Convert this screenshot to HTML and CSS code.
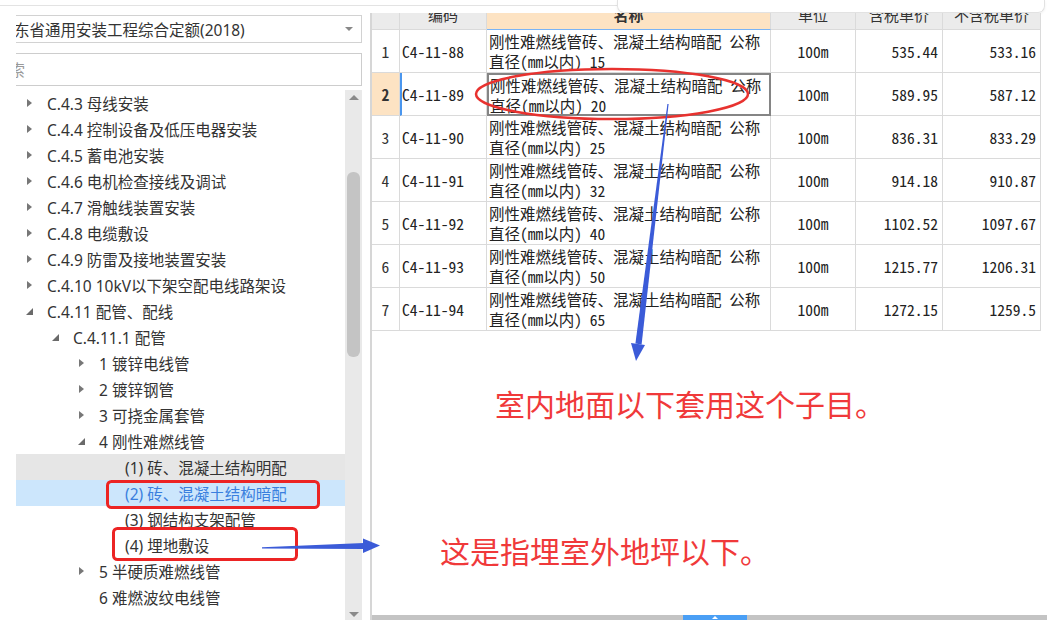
FILE: index.html
```html
<!DOCTYPE html>
<html lang="zh-CN">
<head>
<meta charset="UTF-8" />
<title>定额查询</title>
<link rel="stylesheet" href="styles.css">
</head>
<body>
<div class="page">
  <div class="topbar">
    <div class="topline"></div>
    <div class="popup"></div>
  </div>

  <div class="main">
    <div class="left">
      <div class="combo">
        <span class="combo-text">东省通用安装工程综合定额(2018)</span>
        <span class="combo-arrow"></span>
      </div>
      <div class="search"><span class="search-text">搜索</span></div>
      <div class="tree-wrap">
        <div class="tree">
          <div class="node lv0"><span class="tg closed"></span>C.4.3 母线安装</div>
          <div class="node lv0"><span class="tg closed"></span>C.4.4 控制设备及低压电器安装</div>
          <div class="node lv0"><span class="tg closed"></span>C.4.5 蓄电池安装</div>
          <div class="node lv0"><span class="tg closed"></span>C.4.6 电机检查接线及调试</div>
          <div class="node lv0"><span class="tg closed"></span>C.4.7 滑触线装置安装</div>
          <div class="node lv0"><span class="tg closed"></span>C.4.8 电缆敷设</div>
          <div class="node lv0"><span class="tg closed"></span>C.4.9 防雷及接地装置安装</div>
          <div class="node lv0"><span class="tg closed"></span>C.4.10 10kV以下架空配电线路架设</div>
          <div class="node lv0"><span class="tg open"></span>C.4.11 配管、配线</div>
          <div class="node lv1"><span class="tg open"></span>C.4.11.1 配管</div>
          <div class="node lv2"><span class="tg closed"></span>1 镀锌电线管</div>
          <div class="node lv2"><span class="tg closed"></span>2 镀锌钢管</div>
          <div class="node lv2"><span class="tg closed"></span>3 可挠金属套管</div>
          <div class="node lv2"><span class="tg open"></span>4 刚性难燃线管</div>
          <div class="node lv3 hover"><span class="tg"></span>(1) 砖、混凝土结构明配</div>
          <div class="node lv3 selected"><span class="tg"></span>(2) 砖、混凝土结构暗配</div>
          <div class="node lv3"><span class="tg"></span>(3) 钢结构支架配管</div>
          <div class="node lv3"><span class="tg"></span>(4) 埋地敷设</div>
          <div class="node lv2"><span class="tg closed"></span>5 半硬质难燃线管</div>
          <div class="node lv2"><span class="tg"></span>6 难燃波纹电线管</div>
        </div>
        <div class="vscroll">
          <span class="sc-up"></span>
          <div class="thumb"></div>
          <span class="sc-down"></span>
        </div>
      </div>
    </div>

    <div class="right">
      <div class="grid">
        <div class="c hd"><span></span></div>
        <div class="c hd"><span>编码</span></div>
        <div class="c hd cur"><span>名称</span></div>
        <div class="c hd"><span>单位</span></div>
        <div class="c hd"><span>含税单价</span></div>
        <div class="c hd"><span>不含税单价</span></div>

        <div class="c num">1</div>
        <div class="c code">C4-11-88</div>
        <div class="c name">刚性难燃线管砖、混凝土结构暗配 公称<br>直径(mm以内) 15</div>
        <div class="c unit">100m</div>
        <div class="c price">535.44</div>
        <div class="c price">533.16</div>

        <div class="c num active">2</div>
        <div class="c code mark">C4-11-89</div>
        <div class="c name focus">刚性难燃线管砖、混凝土结构暗配 公称<br>直径(mm以内) 20</div>
        <div class="c unit">100m</div>
        <div class="c price">589.95</div>
        <div class="c price">587.12</div>

        <div class="c num">3</div>
        <div class="c code">C4-11-90</div>
        <div class="c name">刚性难燃线管砖、混凝土结构暗配 公称<br>直径(mm以内) 25</div>
        <div class="c unit">100m</div>
        <div class="c price">836.31</div>
        <div class="c price">833.29</div>

        <div class="c num">4</div>
        <div class="c code">C4-11-91</div>
        <div class="c name">刚性难燃线管砖、混凝土结构暗配 公称<br>直径(mm以内) 32</div>
        <div class="c unit">100m</div>
        <div class="c price">914.18</div>
        <div class="c price">910.87</div>

        <div class="c num">5</div>
        <div class="c code">C4-11-92</div>
        <div class="c name">刚性难燃线管砖、混凝土结构暗配 公称<br>直径(mm以内) 40</div>
        <div class="c unit">100m</div>
        <div class="c price">1102.52</div>
        <div class="c price">1097.67</div>

        <div class="c num">6</div>
        <div class="c code">C4-11-93</div>
        <div class="c name">刚性难燃线管砖、混凝土结构暗配 公称<br>直径(mm以内) 50</div>
        <div class="c unit">100m</div>
        <div class="c price">1215.77</div>
        <div class="c price">1206.31</div>

        <div class="c num">7</div>
        <div class="c code">C4-11-94</div>
        <div class="c name">刚性难燃线管砖、混凝土结构暗配 公称<br>直径(mm以内) 65</div>
        <div class="c unit">100m</div>
        <div class="c price">1272.15</div>
        <div class="c price">1259.5</div>
      </div>
      <div class="blank"></div>
      <div class="hscroll"><div class="hthumb"><span class="hthumb-tri"></span></div></div>
    </div>
  </div>

  <!-- annotations drawn over the screenshot -->
  <svg class="marks" width="1052" height="625" viewBox="0 0 1052 625">
    <ellipse cx="612" cy="94" rx="136" ry="25" fill="none" stroke="#e8322f" stroke-width="2.5" />
    <rect x="107.5" y="481.5" width="211" height="26" rx="4" fill="none" stroke="#ec2424" stroke-width="3" />
    <rect x="113.5" y="528.5" width="183" height="31" rx="4" fill="none" stroke="#ec2424" stroke-width="3" />
    <polygon points="667.4,104 668.6,104 641.6,344.4 635.4,343.6" fill="#3b5bd8" />
    <polygon points="631,343 645,345 636,361" fill="#3b5bd8" />
    <polygon points="262,547.2 262,548.4 364,549 364,543" fill="#3b5bd8" />
    <polygon points="363,538.5 380,545.5 363,553" fill="#3b5bd8" />
  </svg>
  <div class="note note-1">室内地面以下套用这个子目。</div>
  <div class="note note-2">这是指埋室外地坪以下。</div>
</div>
</body>
</html>
```

FILE: styles.css
```css
body {
  margin: 0;
  background: #fff;
  font-family: "Noto Sans", "Noto Sans CJK SC", sans-serif;
  color: #333;
}
.page {
  position: relative;
  width: 1052px;
  height: 625px;
  overflow: hidden;
}
.topbar {
  display: flex;
  height: 13px;
}
.topline {
  width: 617px;
  height: 5px;
  border-bottom: 1px solid #e3e3e3;
}
.popup {
  width: 428px;
  box-sizing: border-box;
  border: 1px solid #e2e2e2;
  border-top: none;
  border-radius: 0 0 7px 7px;
  box-shadow: 0 1px 3px rgba(0, 0, 0, 0.06);
}
.main {
  display: flex;
  height: 612px;
}

/* left tree panel */
.left {
  width: 370px;
  box-sizing: border-box;
  padding: 2px 8px 0 16px;
  display: flex;
  flex-direction: column;
}
.combo {
  height: 28px;
  box-sizing: border-box;
  border: 1px solid #d2d2d2;
  border-left: none;
  display: flex;
  align-items: center;
  justify-content: space-between;
  overflow: hidden;
  font-size: 15.5px;
  color: #333;
}
.combo-text {
  margin-left: -2px;
  white-space: nowrap;
}
.combo-arrow {
  width: 0;
  height: 0;
  margin-right: 8px;
  border-left: 4px solid transparent;
  border-right: 4px solid transparent;
  border-top: 4px solid #888;
}
.search {
  margin-top: 10px;
  height: 33px;
  box-sizing: border-box;
  border: 1px solid #cdcdcd;
  border-left: none;
  display: flex;
  align-items: center;
  overflow: hidden;
  font-size: 15.5px;
  color: #9a9a9a;
}
.search-text {
  margin-left: -22px;
  white-space: nowrap;
}
.tree-wrap {
  margin-top: 4px;
  height: 530px;
  display: flex;
}
.tree {
  flex: 1;
  padding-top: 0;
  overflow: hidden;
}
.node {
  height: 26px;
  display: flex;
  align-items: center;
  font-size: 15.5px;
  color: #333;
  white-space: nowrap;
}
.lv0 { padding-left: 10px; }
.lv1 { padding-left: 36px; }
.lv2 { padding-left: 62px; }
.lv3 { padding-left: 88px; }
.node.hover {
  background: #e6e6e6;
}
.node.selected {
  background: #cce6fc;
  color: #3a7fde;
}
.tg {
  width: 21px;
  height: 26px;
  flex-shrink: 0;
  position: relative;
}
.tg.closed::before {
  content: "";
  position: absolute;
  left: 1px;
  top: 9px;
  border-top: 4px solid transparent;
  border-bottom: 4px solid transparent;
  border-left: 5px solid #777;
}
.tg.open::before {
  content: "";
  position: absolute;
  left: 0;
  top: 10px;
  border-left: 7px solid transparent;
  border-bottom: 7px solid #6a6a6a;
}
.vscroll {
  width: 17px;
  background: #e9e9e9;
  position: relative;
}
.sc-up, .sc-down {
  position: absolute;
  left: 4px;
  width: 0;
  height: 0;
  border-left: 5px solid transparent;
  border-right: 5px solid transparent;
}
.sc-up {
  top: 5px;
  border-bottom: 5px solid #8a8a8a;
}
.sc-down {
  bottom: 3px;
  border-top: 5px solid #8a8a8a;
}
.thumb {
  margin: 82px 2px 0;
  height: 185px;
  background: #c4c4c4;
  border-radius: 6px;
}

/* right grid panel */
.right {
  flex: 1;
  height: 607px;
  border-left: 2px solid #d6d6d6;
  display: flex;
  flex-direction: column;
}
.grid {
  display: grid;
  grid-template-columns: 28px 87px 284px 85px 87px 98px;
  grid-template-rows: 17px repeat(7, 43px);
  font-family: "Noto Sans Mono CJK SC", "Liberation Mono", "Noto Sans CJK SC", monospace;
  font-size: 15.5px;
  color: #222;
}
.c {
  box-sizing: border-box;
  border-right: 1px solid #dadada;
  border-bottom: 1px solid #dadada;
  display: flex;
  align-items: center;
  white-space: nowrap;
}
.hd {
  background: #ebebeb;
  overflow: hidden;
  justify-content: center;
  align-items: flex-start;
  font-family: "Noto Sans", "Noto Sans CJK SC", sans-serif;
  font-size: 15px;
  color: #333;
}
.hd span {
  display: block;
  margin-top: -6px;
  line-height: 16px;
}
.hd.cur {
  background: #fde3c3;
  border-bottom: 1px solid #7ab4f5;
  font-weight: bold;
}
.num {
  justify-content: center;
  color: #333;
}
.num.active {
  background: #fde3c3;
  font-weight: bold;
}
.code {
  padding-left: 2px;
}
.code.mark {
  border-left: 2px solid #4a96ee;
  padding-left: 0;
}
.name {
  padding: 0 2px;
  line-height: 20px;
  white-space: normal;
}
.name.focus {
  border: 2px solid #858585;
  padding: 0 1px;
}
.unit {
  justify-content: center;
}
.price {
  justify-content: flex-end;
  padding-right: 4px;
}
.blank {
  flex: 1;
}
.hscroll {
  height: 5px;
  margin-right: 5px;
  background: #c4c4c4;
  position: relative;
}
.hthumb {
  margin-left: 311px;
  width: 64px;
  height: 5px;
  background: #4a9ff5;
  position: relative;
}
.hthumb-tri {
  position: absolute;
  left: 29px;
  top: 1px;
  border-left: 3px solid transparent;
  border-right: 3px solid transparent;
  border-bottom: 3px solid #fff;
}

/* annotations */
.marks {
  position: absolute;
  left: 0;
  top: 0;
  pointer-events: none;
}
.note {
  position: absolute;
  font-family: "Noto Sans CJK SC", sans-serif;
  font-size: 30px;
  line-height: 30px;
  color: #f0393a;
  white-space: nowrap;
}
.note-1 {
  left: 495px;
  top: 388px;
}
.note-2 {
  left: 440px;
  top: 535px;
}
```
